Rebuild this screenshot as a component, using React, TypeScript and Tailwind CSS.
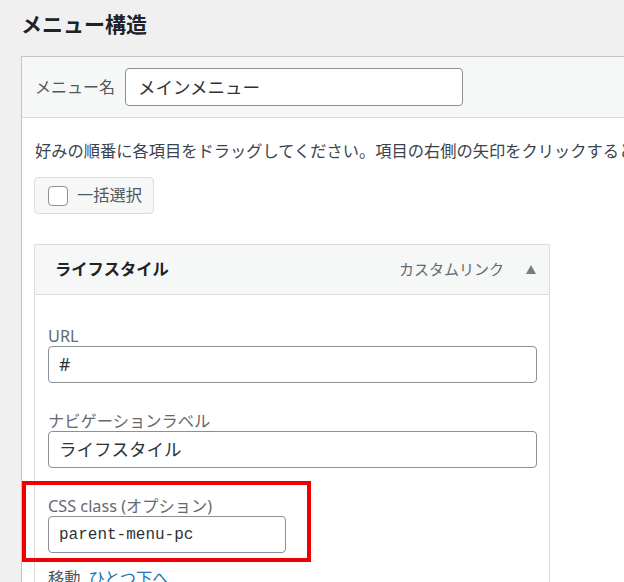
import React from "react";

const font = { fontFamily: '"Noto Sans", "Noto Sans CJK JP", sans-serif' };

export default function App() {
  return (
    <div
      className="relative w-[624px] h-[582px] overflow-hidden bg-[#f0f0f1] pl-[21px] text-[#3c434a]"
      style={font}
    >
      <h2 className="pt-[10px] text-[21px] leading-[28px] font-bold text-[#1d2327]">メニュー構造</h2>

      <div className="mt-[18px] w-[760px] border border-[#c3c4c7] bg-white">
        {/* header */}
        <div className="flex h-[61px] items-center gap-[10px] border-b border-[#dcdcde] bg-[#f6f7f7] px-[13px]">
          <span className="text-[16px] text-[#50575e]">メニュー名</span>
          <div className="flex h-[38px] w-[338px] items-center rounded-[4px] border border-[#8c8f94] bg-white px-[12px] text-[17.5px] text-[#2c3338]">
            メインメニュー
          </div>
        </div>

        {/* body */}
        <div className="px-[12px] pt-[21px] pb-[40px]">
          <p className="ml-[1px] whitespace-nowrap text-[16.25px] leading-[24px] text-[#3c434a]">
            好みの順番に各項目をドラッグしてください。項目の右側の矢印をクリックすると、追加の設定オプションが表示されます。
          </p>

          <div className="mt-[14px] flex h-[37px] w-[120px] items-center gap-[9px] rounded-[4px] border border-[#dcdcde] bg-[#f6f7f7] pl-[13px]">
            <span className="h-[20px] w-[20px] rounded-[4px] border border-[#8c8f94] bg-white" />
            <span className="text-[16.25px] text-[#50575e]">一括選択</span>
          </div>

          <div className="mt-[30px] w-[516px] border border-[#dcdcde]">
            <div className="flex h-[50px] items-center justify-between border-b border-[#dcdcde] bg-[#f6f7f7] pl-[20px] pr-[13px]">
              <span className="text-[16.25px] font-bold text-[#1d2327]">ライフスタイル</span>
              <div className="flex items-center gap-[22px]">
                <span className="text-[15px] text-[#646970]">カスタムリンク</span>
                <svg width="10" height="9" viewBox="0 0 10 9">
                  <polygon points="5,0 10,9 0,9" fill="#787c82" />
                </svg>
              </div>
            </div>

            <div className="pl-[13px] pr-[12px] pt-[31px] pb-[20px]">
              <div className="text-[16.25px] leading-[20px] text-[#646970]">URL</div>
              <div className="flex h-[37px] items-center rounded-[4px] border border-[#8c8f94] bg-white px-[10px] text-[17.5px] text-[#2c3338]">
                #
              </div>

              <div className="mt-[28px] text-[16.25px] leading-[20px] text-[#646970]">ナビゲーションラベル</div>
              <div className="flex h-[37px] items-center rounded-[4px] border border-[#8c8f94] bg-white px-[10px] text-[17.5px] text-[#2c3338]">
                ライフスタイル
              </div>

              <div className="mt-[28px] text-[16.25px] leading-[20px] text-[#646970]">CSS class (オプション)</div>
              <div
                className="flex h-[37px] w-[238px] items-center rounded-[4px] border border-[#8c8f94] bg-white px-[10px] text-[16px] text-[#2c3338]"
                style={{ fontFamily: '"Liberation Mono", monospace' }}
              >
                parent-menu-pc
              </div>

              <div className="mt-[14px] flex gap-[8px] text-[16.25px] leading-[23px]">
                <span className="text-[#50575e]">移動</span>
                <span className="text-[#2271b1] underline">ひとつ下へ</span>
              </div>
            </div>
          </div>
        </div>
      </div>

      {/* annotation */}
      <div className="absolute left-[22px] top-[481px] h-[81px] w-[289px] border-[4px] border-[#f00000]" />
    </div>
  );
}
